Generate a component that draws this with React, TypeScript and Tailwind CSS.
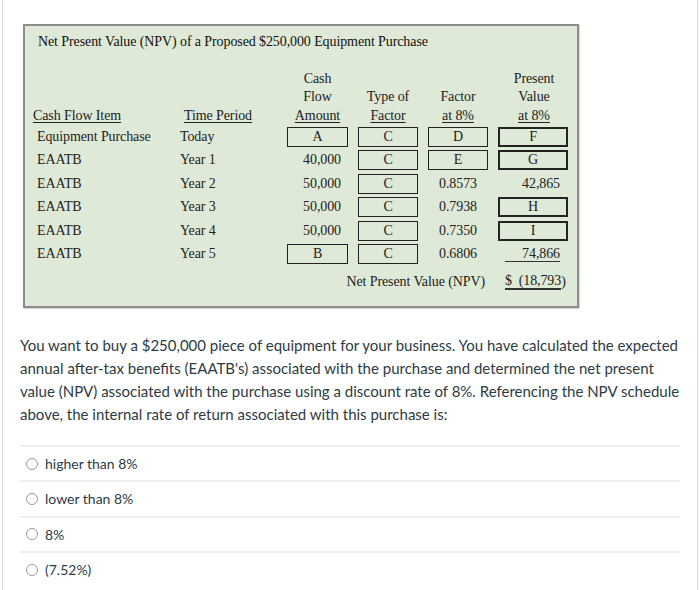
import React from "react";

const serif = "font-['Liberation_Serif','Times_New_Roman',serif]";
const lato = "font-['Lato','Noto_Sans',sans-serif]";

function Box({ label, thick }: { label: string; thick?: boolean }) {
  return (
    <div
      className={`h-[20px] flex items-center justify-center bg-[#dfe9d7] ${
        thick ? "border-2" : "border-[1.5px]"
      } border-[#222]`}
    >
      {label}
    </div>
  );
}

type Cell = string | { box: string };

const rows: { item: string; period: string; amount: Cell; type: Cell; factor: Cell; pv: Cell }[] = [
  { item: "Equipment Purchase", period: "Today", amount: { box: "A" }, type: { box: "C" }, factor: { box: "D" }, pv: { box: "F" } },
  { item: "EAATB", period: "Year 1", amount: "40,000", type: { box: "C" }, factor: { box: "E" }, pv: { box: "G" } },
  { item: "EAATB", period: "Year 2", amount: "50,000", type: { box: "C" }, factor: "0.8573", pv: "42,865" },
  { item: "EAATB", period: "Year 3", amount: "50,000", type: { box: "C" }, factor: "0.7938", pv: { box: "H" } },
  { item: "EAATB", period: "Year 4", amount: "50,000", type: { box: "C" }, factor: "0.7350", pv: { box: "I" } },
  { item: "EAATB", period: "Year 5", amount: { box: "B" }, type: { box: "C" }, factor: "0.6806", pv: "74,866" },
];

function NpvTable() {
  return (
    <div className={`ml-[20px] w-[556px] h-[284px] border-2 border-[#8c8c8c] bg-[#dfe9d7] shadow-[1px_1px_1px_rgba(0,0,0,0.15)] text-[#222] text-[14px] tracking-[-0.1px] ${serif}`}>
      <div className="pl-[13px] pt-[7px] leading-[18.5px] text-[#111]">
        Net Present Value (NPV) of a Proposed $250,000 Equipment Purchase
      </div>

      <div className="mt-[18px] pl-[8px] grid grid-cols-[137px_97px_61px_60px_60px_70px] gap-x-[10px] leading-[18.5px]">
        {/* header */}
        <div className="self-end underline underline-offset-2">Cash Flow Item</div>
        <div className="self-end pl-[4px] underline underline-offset-2">Time Period</div>
        <div className="self-end text-center">
          <div>Cash</div>
          <div>Flow</div>
          <div className="underline underline-offset-2">Amount</div>
        </div>
        <div className="self-end text-center">
          <div>Type of</div>
          <div className="underline underline-offset-2">Factor</div>
        </div>
        <div className="self-end text-center">
          <div>Factor</div>
          <div className="underline underline-offset-2">at 8%</div>
        </div>
        <div className="self-end text-center pl-[2px]">
          <div>Present</div>
          <div>Value</div>
          <div className="underline underline-offset-2">at 8%</div>
        </div>

        {/* body */}
        {rows.map((r, i) => (
          <React.Fragment key={i}>
            <div className="h-[23.5px] flex items-center pl-[4px]">{r.item}</div>
            <div className="h-[23.5px] flex items-center">{r.period}</div>
            <div className="h-[23.5px] flex items-center justify-end">
              {typeof r.amount === "string" ? (
                <span className="pr-[7px]">{r.amount}</span>
              ) : (
                <div className="w-full"><Box label={r.amount.box} /></div>
              )}
            </div>
            <div className="h-[23.5px] flex items-center">
              {typeof r.type === "string" ? r.type : <div className="w-full"><Box label={r.type.box} /></div>}
            </div>
            <div className="h-[23.5px] flex items-center justify-center">
              {typeof r.factor === "string" ? r.factor : <div className="w-full"><Box label={r.factor.box} /></div>}
            </div>
            <div className="h-[23.5px] flex items-center justify-end">
              {typeof r.pv === "string" ? (
                <span className={`mr-[8px] ${i === 5 ? "w-[55px] text-right border-b border-[#333] leading-[15px]" : ""}`}>
                  {r.pv}
                </span>
              ) : (
                <div className="w-full"><Box label={r.pv.box} thick /></div>
              )}
            </div>
          </React.Fragment>
        ))}

        <div className="col-start-1 col-span-5 h-[23.5px] mt-[4px] flex items-center justify-end pr-[3px]">
          Net Present Value (NPV)
        </div>
        <div className="h-[23.5px] mt-[4px] flex items-center pl-[7px] whitespace-pre">
          <span className="border-b-[2.5px] border-[#333] leading-[15px]">$  (18,793</span>)
        </div>
      </div>
    </div>
  );
}

const options = ["higher than 8%", "lower than 8%", "8%", "(7.52%)"];

export default function App() {
  return (
    <div className="w-[700px] h-[590px] bg-white overflow-hidden">
      <div className="mx-[2px] h-full border-x border-[#dcdcdc] pt-[24px]">
        <NpvTable />

        <p className={`mt-[26px] ml-[17px] text-[15px] leading-[23px] text-[#2d3b45] whitespace-nowrap ${lato}`}>
          You want to buy a $250,000 piece of equipment for your business. You have calculated the expected
          <br />
          annual after-tax benefits (EAATB's) associated with the purchase and determined the net present
          <br />
          value (NPV) associated with the purchase using a discount rate of 8%. Referencing the NPV schedule
          <br />
          above, the internal rate of return associated with this purchase is:
        </p>

        <div className={`mt-[19px] ml-[17px] mr-[17px] ${lato}`}>
          {options.map((o) => (
            <div key={o} className="h-[35.3px] border-t-2 border-[#efefef] flex items-center pl-[6px]">
              <span className="w-[12px] h-[12px] rounded-full border border-[#9a9a9a] bg-white" />
              <span className="ml-[7px] text-[14px] text-[#2d3b45]">{o}</span>
            </div>
          ))}
        </div>
      </div>
    </div>
  );
}
